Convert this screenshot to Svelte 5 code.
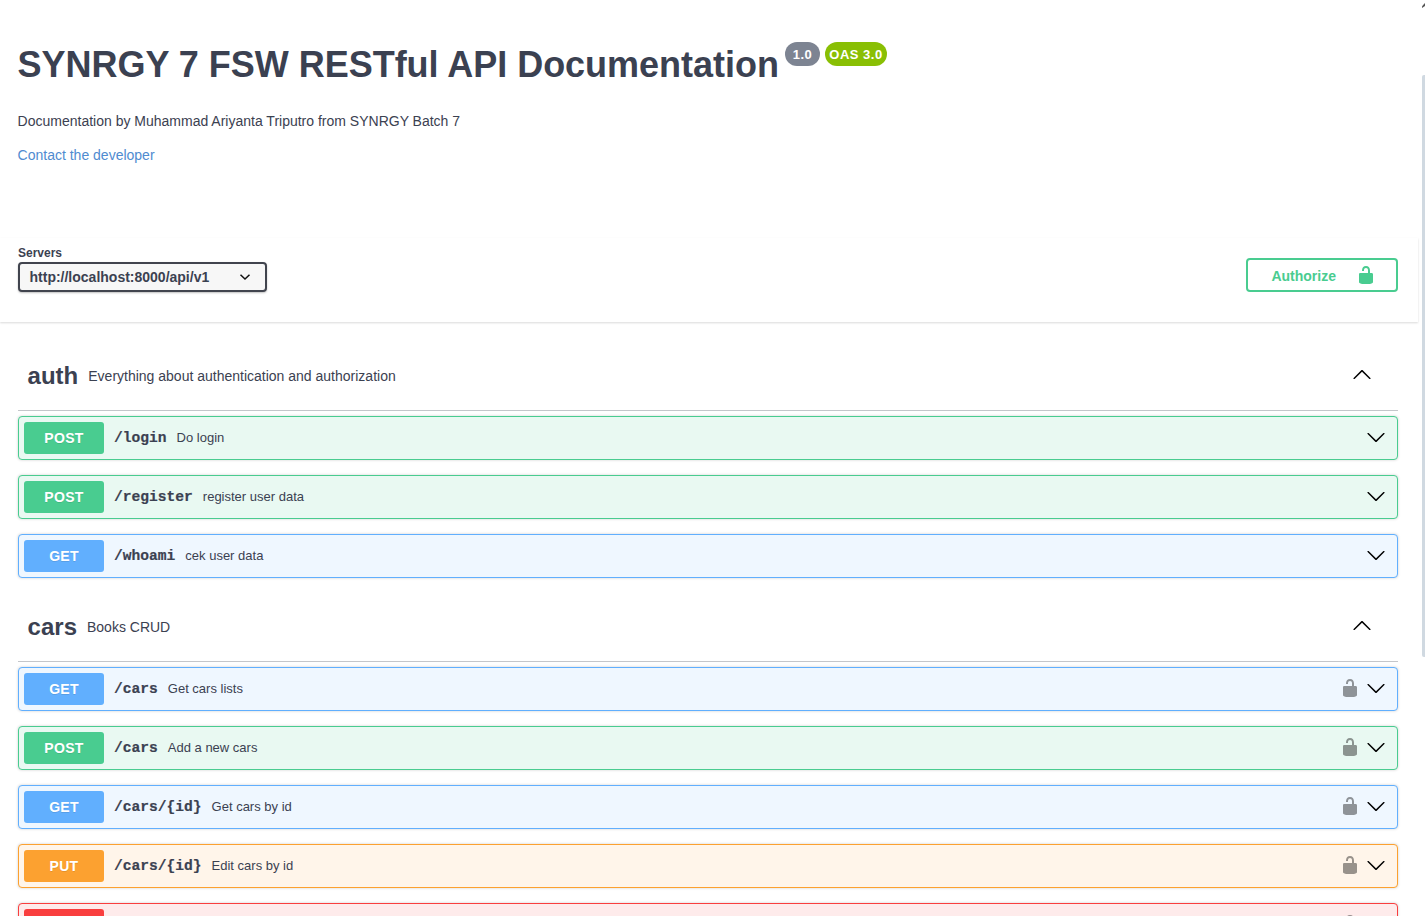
<script>
  const unlocked =
    'M15.8 8H14V5.6C14 2.703 12.665 1 10 1 7.334 1 6 2.703 6 5.6V6h2v-.801C8 3.754 8.797 3 10 3c1.203 0 2 .754 2 2.199V8H4c-.553 0-1 .646-1 1.199V17c0 .549.428 1.139.951 1.307l1.197.387C5.672 18.861 6.55 19 7.1 19h5.8c.549 0 1.428-.139 1.951-.307l1.196-.387c.524-.167.953-.757.953-1.306V9.199C17 8.646 16.352 8 15.8 8z';
  const arrowUp =
    'M17.418 14.908c.272.268.709.268.979 0s.271-.701 0-.969l-7.908-7.83c-.27-.268-.707-.268-.979 0l-7.908 7.83c-.27.268-.27.701 0 .969.271.268.709.268.979 0L10 7.767l7.418 7.141z';
  const arrowDown =
    'M17.418 6.109c.272-.268.709-.268.979 0s.271.701 0 .969l-7.908 7.83c-.27.268-.707.268-.979 0l-7.908-7.83c-.27-.268-.27-.701 0-.969.271-.268.709-.268.979 0L10 13.25l7.418-7.141z';

  const sections = [
    {
      name: 'auth',
      description: 'Everything about authentication and authorization',
      operations: [
        { method: 'POST', path: '/login', summary: 'Do login' },
        { method: 'POST', path: '/register', summary: 'register user data' },
        { method: 'GET', path: '/whoami', summary: 'cek user data' }
      ]
    },
    {
      name: 'cars',
      description: 'Books CRUD',
      operations: [
        { method: 'GET', path: '/cars', summary: 'Get cars lists', secured: true },
        { method: 'POST', path: '/cars', summary: 'Add a new cars', secured: true },
        { method: 'GET', path: '/cars/{id}', summary: 'Get cars by id', secured: true },
        { method: 'PUT', path: '/cars/{id}', summary: 'Edit cars by id', secured: true },
        { method: '', kind: 'delete', path: '', summary: '', secured: true }
      ]
    }
  ];
</script>

{#snippet icon(d)}
  <svg class="icon" viewBox="0 0 20 20" aria-hidden="true"><path {d} /></svg>
{/snippet}

<div class="page">
  <main>
    <header class="info">
      <div class="heading">
        <h1>SYNRGY 7 FSW RESTful API Documentation</h1>
        <span class="badge version">1.0</span>
        <span class="badge oas">OAS 3.0</span>
      </div>
      <p class="about">Documentation by Muhammad Ariyanta Triputro from SYNRGY Batch 7</p>
      <span class="contact">Contact the developer</span>
    </header>

    <section class="schemes">
      <div class="servers">
        <span class="label">Servers</span>
        <div class="select">
          <span>http://localhost:8000/api/v1</span>
          <svg class="caret" viewBox="0 0 12 8" aria-hidden="true"><path d="M1.5 1.7 6 6l4.5-4.3" /></svg>
        </div>
      </div>
      <button class="authorize"><span>Authorize</span>{@render icon(unlocked)}</button>
    </section>

    {#each sections as section}
      <section class="tag">
        <div class="tag-head">
          <h2>{section.name}</h2>
          <span class="description">{section.description}</span>
          {@render icon(arrowUp)}
        </div>
        <div class="operations">
          {#each section.operations as op}
            <div class="op {op.kind ?? op.method.toLowerCase()}">
              <span class="method">{op.method}</span>
              <span class="path">{op.path}</span>
              <span class="summary">{op.summary}</span>
              {#if op.secured}<span class="lock">{@render icon(unlocked)}</span>{/if}
              {@render icon(arrowDown)}
            </div>
          {/each}
        </div>
      </section>
    {/each}
  </main>
  <aside class="scrollbar">
    <svg viewBox="0 0 3 5" aria-hidden="true"><path d="M0 3.2 3 0v3L0 5z" /></svg>
    <div class="thumb"></div>
  </aside>
</div>

<style>
  :global(body) { margin: 0; background: #fff; }
  .page {
    display: flex;
    justify-content: space-between;
    height: 916px;
    overflow: hidden;
    color: #3b4151;
    font-family: "Liberation Sans", Arial, sans-serif;
  }
  .page * { box-sizing: border-box; }
  main { width: 1418px; }
  .icon { display: block; width: 20px; height: 20px; flex: none; fill: currentColor; }

  .info { height: 238px; padding: 42px 18px 0 17.6px; }
  .heading { display: flex; align-items: flex-start; height: 65px; }
  h1 { width: 761px; margin: 2px 6.4px 0 0; font-size: 36px; line-height: 42px; letter-spacing: -.02px; white-space: nowrap; }
  .badge {
    height: 24px;
    margin-right: 5px;
    border-radius: 12px;
    color: #fff;
    font-size: 13px;
    font-weight: 700;
    line-height: 25px;
    letter-spacing: .5px;
    text-align: center;
    white-space: nowrap;
  }
  .version { width: 35px; background: #7d8492; }
  .oas { width: 62px; background: #89bf04; }
  .about { margin: 5px 0 16px; font-size: 14px; line-height: 18px; }
  .contact { display: block; color: #4f8bd0; font-size: 14px; line-height: 18px; }

  .schemes {
    display: flex;
    justify-content: space-between;
    height: 84px;
    padding: 7px 20px 0 18px;
    box-shadow: 0 1px 2px rgba(0, 0, 0, .15);
  }
  .label { display: block; height: 17px; font-size: 12px; font-weight: 700; line-height: 16px; }
  .select {
    display: flex;
    align-items: center;
    justify-content: space-between;
    width: 249px;
    height: 30px;
    padding: 0 14px 0 9.5px;
    border: 2px solid #41444e;
    border-radius: 4px;
    background: #f7f7f7;
    box-shadow: 0 1px 2px rgba(0, 0, 0, .25);
    font-size: 14px;
    font-weight: 700;
  }
  .caret { width: 12px; height: 8px; fill: none; stroke: #111; stroke-width: 1.5; }
  .authorize {
    display: flex;
    align-items: center;
    justify-content: space-between;
    width: 152px;
    height: 34px;
    margin-top: 13px;
    padding: 0 20px 0 23.4px;
    border: 2px solid #49cc90;
    border-radius: 4px;
    background: transparent;
    color: #49cc90;
    font: 700 14px/17px "Liberation Sans", Arial, sans-serif;
  }
  .authorize span { padding-top: 2px; }

  .tag { padding: 0 20px 0 18px; }
  .tag-head {
    display: flex;
    align-items: center;
    height: 69px;
    margin-top: 20px;
    padding: 0 26px 0 9.6px;
    border-bottom: 1px solid rgba(59, 65, 81, .3);
  }
  .tag + .tag .tag-head { margin-top: 15px; }
  h2 { margin: 0; font-size: 24px; line-height: 28px; }
  .description { flex: 1; padding-left: 10px; font-size: 14px; }
  .tag-head .icon { color: #000; margin-top: -5px; }

  .operations { display: grid; gap: 15px; padding-top: 5px; }
  .op {
    display: flex;
    align-items: center;
    height: 44px;
    padding: 0 11px 0 5px;
    border: 1px solid var(--c);
    border-radius: 4px;
    background: var(--bg);
    box-shadow: 0 0 3px rgba(0, 0, 0, .19);
  }
  .post { --c: #49cc90; --bg: #e9f9f2; }
  .get { --c: #61affe; --bg: #eff7ff; }
  .put { --c: #fca130; --bg: #fff5ea; }
  .delete { --c: #f93e3e; --bg: #feebeb; }
  .method {
    width: 80px;
    height: 32px;
    border-radius: 3px;
    background: var(--c);
    color: #fff;
    font-size: 14px;
    font-weight: 700;
    line-height: 32px;
    letter-spacing: .3px;
    text-align: center;
    text-shadow: 0 1px 0 rgba(0, 0, 0, .1);
  }
  .path {
    padding: 0 10px;
    font: 700 14.6px/18px "Liberation Mono", monospace;
    -webkit-text-stroke: .2px currentColor;
  }
  .summary { flex: 1; font-size: 13px; line-height: 16px; }
  .lock { margin-right: 6px; opacity: .4; color: #000; }
  .op .icon { color: #000; margin-top: -2px; }

  .scrollbar { width: 3px; padding-top: 3px; }
  .scrollbar svg { display: block; width: 3px; height: 5px; fill: #555; }
  .thumb { height: 582px; margin-top: 67px; border-radius: 2px 0 0 2px; background: #d0d9e1; }
</style>
